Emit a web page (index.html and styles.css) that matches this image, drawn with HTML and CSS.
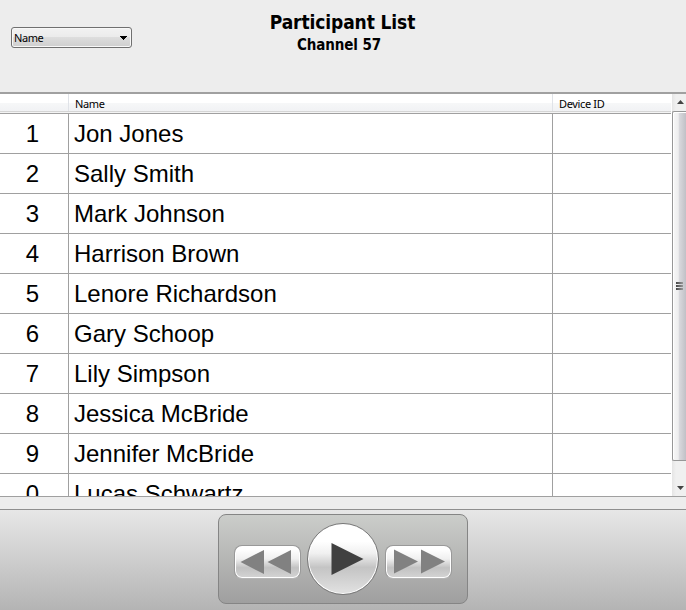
FILE: index.html
```html
<!DOCTYPE html>
<html lang="en">
<head>
<meta charset="utf-8">
<title>Participant List</title>
<link rel="stylesheet" href="styles.css">
</head>
<body>
<header class="top">
  <div class="select"><span>Name</span><svg width="8" height="5" viewBox="0 0 8 5" shape-rendering="crispEdges"><path d="M0 0H7V1H6V2H5V3H4V4H3V3H2V2H1V1H0Z"/></svg></div>
  <div class="titles"><h1>Participant List</h1><h2>Channel 57</h2></div>
</header>
<main class="list">
  <div class="table">
    <div class="row head"><span></span><span>Name</span><span>Device ID</span></div>
    <div class="row"><span>1</span><span>Jon Jones</span><span></span></div>
    <div class="row"><span>2</span><span>Sally Smith</span><span></span></div>
    <div class="row"><span>3</span><span>Mark Johnson</span><span></span></div>
    <div class="row"><span>4</span><span>Harrison Brown</span><span></span></div>
    <div class="row"><span>5</span><span>Lenore Richardson</span><span></span></div>
    <div class="row"><span>6</span><span>Gary Schoop</span><span></span></div>
    <div class="row"><span>7</span><span>Lily Simpson</span><span></span></div>
    <div class="row"><span>8</span><span>Jessica McBride</span><span></span></div>
    <div class="row"><span>9</span><span>Jennifer McBride</span><span></span></div>
    <div class="row"><span>0</span><span>Lucas Schwartz</span><span></span></div>
  </div>
  <div class="scrollbar">
    <div class="arrow up"><svg width="7" height="4" viewBox="0 0 7 4"><path d="M0 4L3.5 0L7 4Z" fill="#444"/></svg></div>
    <div class="thumb"><i></i><i></i><i></i></div>
    <div class="arrow down"><svg width="7" height="4" viewBox="0 0 7 4"><path d="M0 0H7L3.5 4Z" fill="#444"/></svg></div>
  </div>
</main>
<footer class="bottom">
  <div class="panel">
    <div class="skip"><svg width="67" height="34" viewBox="0 0 67 34"><path d="M6.5 17L30 5V29ZM33.5 17L57 5V29Z"/></svg></div>
    <div class="play"><svg width="72" height="72" viewBox="0 0 72 72"><path d="M24.500 20L56.500 36L24.500 52Z"/></svg></div>
    <div class="skip"><svg width="67" height="34" viewBox="0 0 67 34"><path d="M9 4.500V28.500L33 16.500ZM36 4.500V28.500L60 16.500Z"/></svg></div>
  </div>
</footer>
</body>
</html>
```
FILE: styles.css
```css
* { box-sizing: border-box; }
body {
  margin: 0;
  width: 686px;
  height: 610px;
  overflow: hidden;
  background: #ededed;
  color: #000;
  font-family: "DejaVu Sans Condensed", "Noto Sans", sans-serif;
}
.top {
  height: 92px;
  display: grid;
  grid-template-columns: 132px 1fr 133px;
}
.select {
  width: 121px;
  height: 21px;
  margin: 27px 0 0 11px;
  padding: 0 3px 0 2px;
  display: flex;
  align-items: center;
  justify-content: space-between;
  border: 1px solid #707070;
  border-radius: 3px;
  box-shadow: inset 0 0 0 1px #f8f8f8;
  background: linear-gradient(#f2f2f2, #ebebeb 48%, #dddddd 50%, #cfcfcf);
  font: 11px/19px "Noto Sans", sans-serif;
  letter-spacing: -0.4px;
}
.select svg { margin-top: 1px; }
.titles { text-align: center; padding-top: 11px; }
h1, h2 { margin: 0; font-weight: bold; white-space: nowrap; }
h1 { font-size: 19px; line-height: 22px; letter-spacing: -0.1px; }
h2 { font-size: 15px; line-height: 24px; letter-spacing: -0.1px; padding-right: 7px; }
.list {
  height: 405px;
  display: flex;
  overflow: hidden;
  background: #fff;
  border-top: 2px solid #a0a0a0;
  border-bottom: 1px solid #a0a0a0;
}
.table { width: 671px; overflow: hidden; }
.row {
  height: 40px;
  display: grid;
  grid-template-columns: 69px 484px 118px;
  border-bottom: 1px solid #a0a0a0;
  font: 24px/39px "Liberation Sans", sans-serif;
}
.row span { padding-left: 5px; border-right: 1px solid #a0a0a0; white-space: nowrap; }
.row span:first-child { text-align: center; padding: 0 3px 0 0; }
.row span:last-child { border-right: 0; }
.row.head {
  height: 20px;
  background: linear-gradient(#fff 45%, #f6f7f8 50%, #f1f2f4 17px, #d5d5d5 17px, #d5d5d5 18px, #f4f4f4 18px);
  font: 11px/20px "Noto Sans", sans-serif;
  letter-spacing: -0.35px;
}
.row.head span { height: 17px; padding-left: 6px; border-color: #e0e3e8; }
.scrollbar {
  width: 15px;
  padding-left: 1px;
  display: flex;
  flex-direction: column;
  background: linear-gradient(90deg, #fff 1px, #e5e5e5 1px, #f0f0f0 5px);
}
.arrow { display: flex; align-items: center; justify-content: center; }
.arrow svg { margin-left: 2px; }
.up { height: 17px; padding-bottom: 2px; }
.down { height: 35px; padding-top: 18px; }
.thumb {
  height: 350px;
  display: flex;
  flex-direction: column;
  align-items: center;
  justify-content: center;
  gap: 1px;
  border: 1px solid #979797;
  border-right: 0;
  border-radius: 2px 0 0 2px;
  background: linear-gradient(90deg, #f7f7f7, #eeeeef 40%, #d8d8dc 50%, #c0c0c6);
  box-shadow: inset 1px 1px #fff;
}
.thumb i { width: 7px; height: 2px; background: linear-gradient(90deg, #444, #999); }
.bottom {
  height: 101px;
  margin-top: 12px;
  padding-top: 4px;
  border-top: 1px solid #8f8f8f;
  background: linear-gradient(#e7e7e7, #b4b4b4);
}
.panel {
  width: 250px;
  height: 90px;
  margin: 0 auto;
  display: flex;
  align-items: center;
  justify-content: center;
  gap: 6px;
  border: 1px solid #858585;
  border-radius: 8px;
  background: linear-gradient(#cbcdca, #9f9f9f);
}
.skip, .play { display: flex; }
.skip {
  width: 67px;
  height: 34px;
  margin-top: 6px;
  border: 1px solid #999;
  border-bottom-color: #b5b5b5;
  border-radius: 8px;
  box-shadow: inset 0 0 0 1px #fff;
  background: linear-gradient(#fff 10%, #f0f0f0 40%, #c2c2c2 68%, #d4d4d4);
}
.skip path { fill: #818181; }
.skip svg { flex: none; margin: -1px; }
.play {
  width: 72px;
  height: 72px;
  border: 1px solid #777;
  border-radius: 50%;
  box-shadow: inset 0 0 0 1px #fff;
  background: linear-gradient(#fff 25%, #f0f0f0 42%, #c4c4c4 62%, #dedede 95%);
}
.play path { fill: #404040; }
.play svg { flex: none; margin: -1px; }
```
